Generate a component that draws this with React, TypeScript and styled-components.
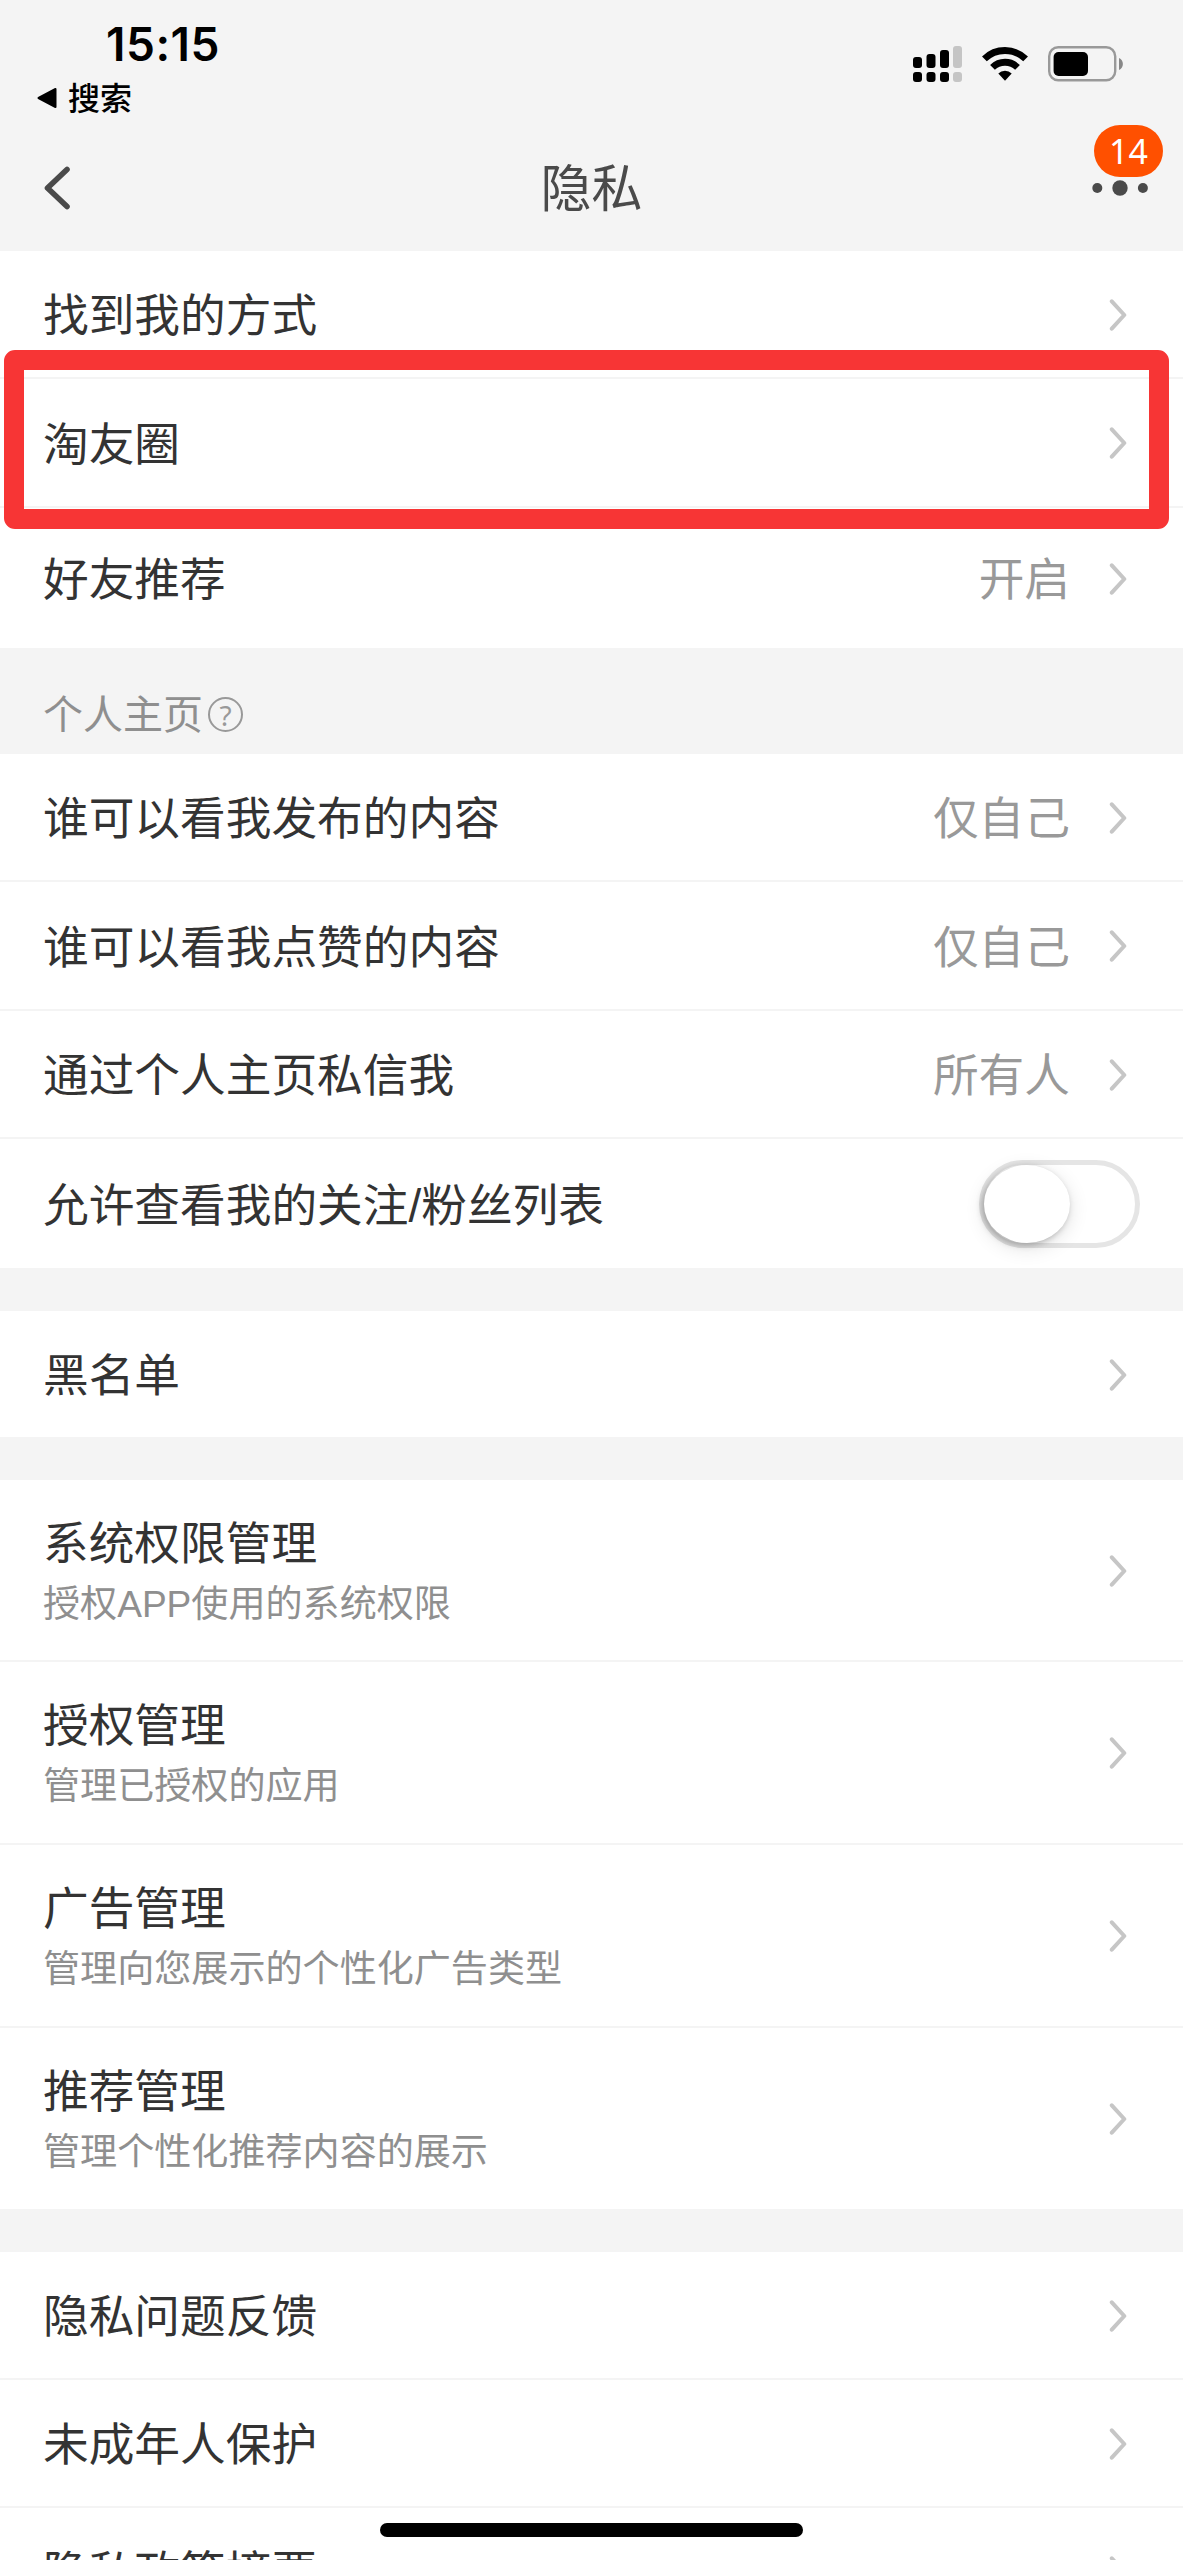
import React from "react";
import styled, { createGlobalStyle } from "styled-components";

const GlobalStyle = createGlobalStyle`
  * { box-sizing: border-box; }
  html, body { margin: 0; padding: 0; background: #f4f4f4; }
  body {
    font-family: "Liberation Sans", "Noto Sans CJK SC", sans-serif;
    overflow: hidden;
  }
`;

const Screen = styled.main`
  position: relative;
  display: flex;
  flex-direction: column;
  width: 1183px;
  height: 2560px;
  overflow: hidden;
  background: #f4f4f4;
`;

const StatusBar = styled.header`
  display: flex;
  justify-content: space-between;
  flex: none;
  height: 125px;
  padding: 20px 59px 0 37px;
`;

const StatusLeft = styled.div`
  display: flex;
  flex-direction: column;
`;

const Clock = styled.time`
  margin-left: 69px;
  height: 50px;
  font: 600 46px/49px "Inter", sans-serif;
  letter-spacing: 0.5px;
  color: #000;
`;

const BackToSearch = styled.div`
  display: flex;
  align-items: center;
  gap: 11px;
  height: 48px;
  margin-top: 2px;
  font: 500 32px/48px "Noto Sans CJK SC", sans-serif;
  color: #000;
`;

const BackMark = styled.svg`
  margin-top: 4px;
`;

const StatusIcons = styled.div`
  display: flex;
  gap: 20px;
  padding-top: 26px;
`;

const NavBar = styled.nav`
  display: grid;
  grid-template-columns: 120px 1fr 120px;
  align-items: center;
  flex: none;
  height: 126px;
`;

const BackButton = styled.button`
  display: flex;
  padding: 0 0 0 42px;
  border: 0;
  background: none;
`;

const Title = styled.h1`
  margin: 0;
  padding-bottom: 6px;
  text-align: center;
  font: 400 51px/76px "Noto Sans CJK SC", sans-serif;
  color: #4a4a4a;
`;

const MoreButton = styled.button`
  position: relative;
  display: flex;
  padding: 0 0 0 28px;
  border: 0;
  background: none;
`;

const Badge = styled.span`
  position: absolute;
  left: 31px;
  bottom: 19px;
  width: 69px;
  height: 52px;
  border-radius: 26px;
  background: #ff5000;
  color: #fff;
  text-align: center;
  font: 400 34px/53px "Noto Sans", sans-serif;
`;

const Group = styled.section<{ $gap?: number }>`
  display: flex;
  flex-direction: column;
  flex: none;
  margin-top: ${(p) => p.$gap ?? 0}px;
  background: #fff;
`;

const Row = styled.div<{ $height: number; $last?: boolean }>`
  position: relative;
  display: flex;
  align-items: center;
  height: ${(p) => p.$height}px;
  padding: 1px 54px 0 43px;
  border-bottom: ${(p) => (p.$last ? "0" : "2px solid #f4f4f4")};
`;

const RowText = styled.div`
  display: flex;
  flex-direction: column;
  flex: 1;
`;

const Label = styled.span<{ $stacked?: boolean }>`
  padding-top: ${(p) => (p.$stacked ? 1 : 5)}px;
  font-size: 45.7px;
  line-height: 66px;
  color: #333;
`;

const Hint = styled.span`
  margin-top: -1px;
  font-size: 37.1px;
  line-height: 54px;
  color: #8f8f8f;
`;

const Value = styled.span`
  margin-right: 39px;
  padding-top: 5px;
  font-size: 45.7px;
  line-height: 66px;
  color: #999;
`;

const GroupHeading = styled.h2`
  display: flex;
  align-items: center;
  flex: none;
  gap: 5px;
  height: 106px;
  margin: 0;
  padding: 22px 0 0 43px;
  font-size: 40px;
  font-weight: 400;
  color: #8f8f8f;
`;

const HelpMark = styled.span`
  width: 35px;
  height: 35px;
  margin-top: 4px;
  border: 2px solid #999;
  border-radius: 50%;
  text-align: center;
  font: 400 28px/32px "Noto Sans", sans-serif;
  color: #999;
`;

const SwitchTrack = styled.div`
  flex: none;
  width: 161px;
  height: 88px;
  margin-right: -11px;
  padding: 0;
  border: 5.5px solid #e5e5e5;
  border-radius: 44px;
`;

const SwitchKnob = styled.div`
  width: 86px;
  height: 78px;
  border-radius: 43px / 39px;
  background: #fff;
  box-shadow: 0 5px 20px rgba(0, 0, 0, 0.12), -2px 2px 6px rgba(0, 0, 0, 0.26);
`;

const FocusFrame = styled.div`
  position: absolute;
  z-index: 1;
  left: 3.5px;
  top: -29px;
  width: 1165.5px;
  height: 179px;
  border: 20px solid #f73535;
  border-radius: 11px;
`;

const HomeIndicator = styled.div`
  position: absolute;
  left: 380px;
  bottom: 23px;
  width: 423px;
  height: 14px;
  border-radius: 7px;
  background: #000;
`;

const Chevron = () => (
  <svg width="20" height="34" viewBox="0 0 20 34" fill="none">
    <path
      d="M2.8 3.3L15.3 17L2.8 30.7"
      stroke="#c6c6c6"
      strokeWidth="4"
      strokeLinecap="round"
      strokeLinejoin="round"
    />
  </svg>
);

const SignalIcon = () => (
  <svg width="49" height="36" viewBox="0 0 49 36">
    <g fill="#000">
      <rect x="0" y="11" width="9" height="11" rx="3" />
      <rect x="13.5" y="8" width="9" height="14" rx="3" />
      <rect x="27" y="4" width="9" height="18" rx="3" />
      <rect x="0" y="26" width="9" height="10" rx="3" />
      <rect x="13.5" y="26" width="9" height="10" rx="3" />
      <rect x="27" y="26" width="9" height="10" rx="3" />
    </g>
    <g fill="#c5c5c5">
      <rect x="40" y="0" width="9" height="22" rx="3" />
      <rect x="40" y="26" width="9" height="10" rx="3" />
    </g>
  </svg>
);

const WifiIcon = () => (
  <svg width="46" height="36" viewBox="0 0 46 36">
    <g fill="none" stroke="#000" strokeWidth="6.8">
      <path d="M2.4 12.9A29.5 29.5 0 0 1 43.6 12.9" />
      <path d="M10.5 21.4A17.8 17.8 0 0 1 35.5 21.4" />
    </g>
    <path d="M16.3 27.6A9.5 9.5 0 0 1 29.7 27.6L23 34.7Z" fill="#000" />
  </svg>
);

const BatteryIcon = () => (
  <svg width="76" height="36" viewBox="0 0 76 36">
    <rect x="1.2" y="1.2" width="66" height="33" rx="9" fill="none" stroke="#999" strokeWidth="2.4" />
    <rect x="5.6" y="6" width="34.4" height="24" rx="5" fill="#000" />
    <path d="M71 12C76.2 14 76.2 22 71 24Z" fill="#888" />
  </svg>
);

type Item = { label: string; value?: string; height: number; focused?: boolean };

const findMe: Item[] = [
  { label: "找到我的方式", height: 128 },
  { label: "淘友圈", height: 129, focused: true },
  { label: "好友推荐", value: "开启", height: 140 },
];

const profile: Item[] = [
  { label: "谁可以看我发布的内容", value: "仅自己", height: 128 },
  { label: "谁可以看我点赞的内容", value: "仅自己", height: 129 },
  { label: "通过个人主页私信我", value: "所有人", height: 128 },
];

const management = [
  { label: "系统权限管理", hint: "授权APP使用的系统权限", height: 182 },
  { label: "授权管理", hint: "管理已授权的应用", height: 183 },
  { label: "广告管理", hint: "管理向您展示的个性化广告类型", height: 183 },
  { label: "推荐管理", hint: "管理个性化推荐内容的展示", height: 181 },
];

const support: Item[] = [
  { label: "隐私问题反馈", height: 128 },
  { label: "未成年人保护", height: 128 },
  { label: "隐私政策摘要", height: 128 },
];

const ItemRow = ({ item, last }: { item: Item; last?: boolean }) => (
  <Row $height={item.height} $last={last}>
    <RowText>
      <Label>{item.label}</Label>
    </RowText>
    {item.value && <Value>{item.value}</Value>}
    <Chevron />
    {item.focused && <FocusFrame />}
  </Row>
);

export default function App() {
  return (
    <>
      <GlobalStyle />
      <Screen>
        <StatusBar>
          <StatusLeft>
            <Clock>15:15</Clock>
            <BackToSearch>
              <BackMark width="20" height="22" viewBox="0 0 20 22">
                <path d="M18.5 2V20L1.5 11Z" stroke="#000" strokeWidth="2" strokeLinejoin="round" />
              </BackMark>
              搜索
            </BackToSearch>
          </StatusLeft>
          <StatusIcons>
            <SignalIcon />
            <WifiIcon />
            <BatteryIcon />
          </StatusIcons>
        </StatusBar>

        <NavBar>
          <BackButton aria-label="返回">
            <svg width="32" height="50" viewBox="0 0 32 50" fill="none">
              <path
                d="M25 6.5L5.5 25L25 43.5"
                stroke="#4a4a4a"
                strokeWidth="5.6"
                strokeLinecap="round"
                strokeLinejoin="round"
              />
            </svg>
          </BackButton>
          <Title>隐私</Title>
          <MoreButton aria-label="更多">
            <svg width="60" height="16" viewBox="0 0 60 16" fill="#4a4a4a">
              <circle cx="6.3" cy="8" r="5" />
              <circle cx="29" cy="8" r="7.7" />
              <circle cx="51.9" cy="8" r="5" />
            </svg>
            <Badge>14</Badge>
          </MoreButton>
        </NavBar>

        <Group>
          {findMe.map((item, i) => (
            <ItemRow key={item.label} item={item} last={i === findMe.length - 1} />
          ))}
        </Group>

        <GroupHeading>
          个人主页<HelpMark>?</HelpMark>
        </GroupHeading>
        <Group>
          {profile.map((item) => (
            <ItemRow key={item.label} item={item} />
          ))}
          <Row $height={129} $last>
            <RowText>
              <Label>允许查看我的关注/粉丝列表</Label>
            </RowText>
            <SwitchTrack>
              <SwitchKnob />
            </SwitchTrack>
          </Row>
        </Group>

        <Group $gap={43}>
          <ItemRow item={{ label: "黑名单", height: 126 }} last />
        </Group>

        <Group $gap={43}>
          {management.map((item, i) => (
            <Row key={item.label} $height={item.height} $last={i === management.length - 1}>
              <RowText>
                <Label $stacked>{item.label}</Label>
                <Hint>{item.hint}</Hint>
              </RowText>
              <Chevron />
            </Row>
          ))}
        </Group>

        <Group $gap={43}>
          {support.map((item) => (
            <ItemRow key={item.label} item={item} />
          ))}
        </Group>
        <HomeIndicator />
      </Screen>
    </>
  );
}
